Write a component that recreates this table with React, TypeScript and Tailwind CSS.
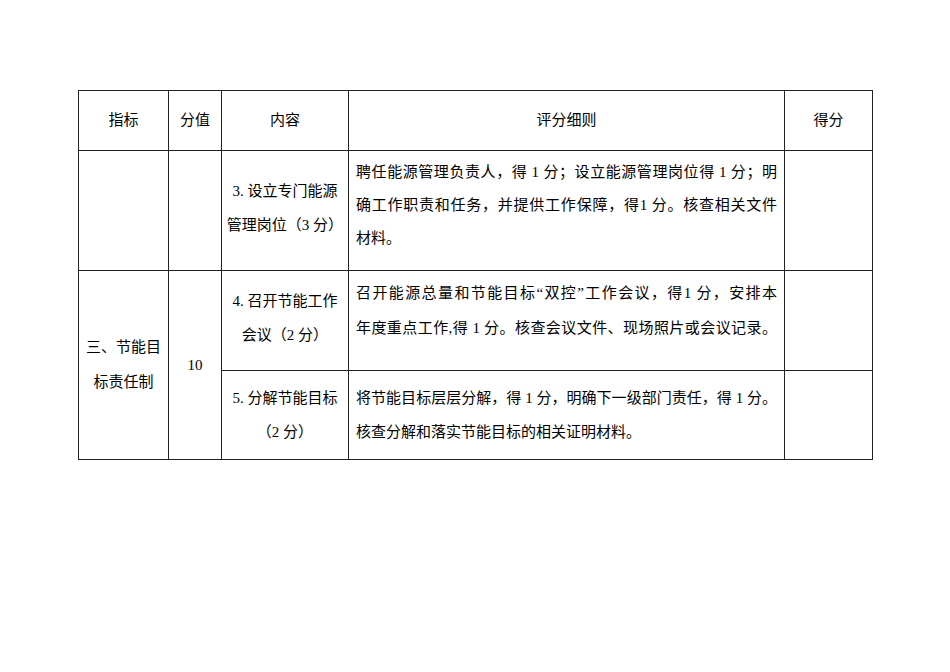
const cell = 'border border-[#222] p-0 text-center align-middle'

function Line({ text, full }: { text: string; full?: boolean }) {
  return (
    <div className={full ? 'whitespace-nowrap text-justify [text-align-last:justify]' : 'whitespace-nowrap text-left'}>
      {text}
    </div>
  )
}

export default function App() {
  return (
    <div className="min-h-[672px] w-[950px] bg-white pl-[78px] pt-[90px] text-[15px] text-black font-[family-name:'Liberation_Serif','Noto_Sans_CJK_SC',serif]">
      <table className="w-[794px] table-fixed border-collapse">
        <colgroup>
          <col className="w-[90px]" />
          <col className="w-[53px]" />
          <col className="w-[127px]" />
          <col className="w-[436px]" />
          <col className="w-[88px]" />
        </colgroup>
        <thead>
          <tr>
            <th className={`${cell} h-[60px] font-normal`}>指标</th>
            <th className={`${cell} font-normal`}>分值</th>
            <th className={`${cell} font-normal`}>内容</th>
            <th className={`${cell} font-normal`}>评分细则</th>
            <th className={`${cell} font-normal`}>得分</th>
          </tr>
        </thead>
        <tbody>
          {/* continued from previous page */}
          <tr>
            <td className={`${cell} h-[120px]`} />
            <td className={cell} />
            <td className={`${cell} pb-[6px] leading-[34px]`}>
              <div>3. 设立专门能源</div>
              <div>管理岗位（3 分）</div>
            </td>
            <td className={`${cell} px-[7px] pt-[5px] align-top leading-[33px]`}>
              <Line full text="聘任能源管理负责人，得 1 分；设立能源管理岗位得 1 分；明" />
              <Line full text="确工作职责和任务，并提供工作保障，得1 分。核查相关文件" />
              <Line text="材料。" />
            </td>
            <td className={cell} />
          </tr>
          <tr>
            <td rowSpan={2} className={`${cell} leading-[35px]`}>
              <div>三、节能目</div>
              <div>标责任制</div>
            </td>
            <td rowSpan={2} className={cell}>10</td>
            <td className={`${cell} h-[100px] pb-[5px] leading-[34px]`}>
              <div>4. 召开节能工作</div>
              <div>会议（2 分）</div>
            </td>
            <td className={`${cell} px-[7px] pt-[5px] align-top leading-[35px]`}>
              <Line full text="召开能源总量和节能目标“双控”工作会议，得1 分，安排本" />
              <Line full text="年度重点工作,得 1 分。核查会议文件、现场照片或会议记录。" />
            </td>
            <td className={cell} />
          </tr>
          <tr>
            <td className={`${cell} h-[89px] leading-[34px]`}>
              <div>5. 分解节能目标</div>
              <div>（2 分）</div>
            </td>
            <td className={`${cell} px-[7px] leading-[34px]`}>
              <Line full text="将节能目标层层分解，得 1 分，明确下一级部门责任，得 1 分。" />
              <Line text="核查分解和落实节能目标的相关证明材料。" />
            </td>
            <td className={cell} />
          </tr>
        </tbody>
      </table>
    </div>
  )
}
